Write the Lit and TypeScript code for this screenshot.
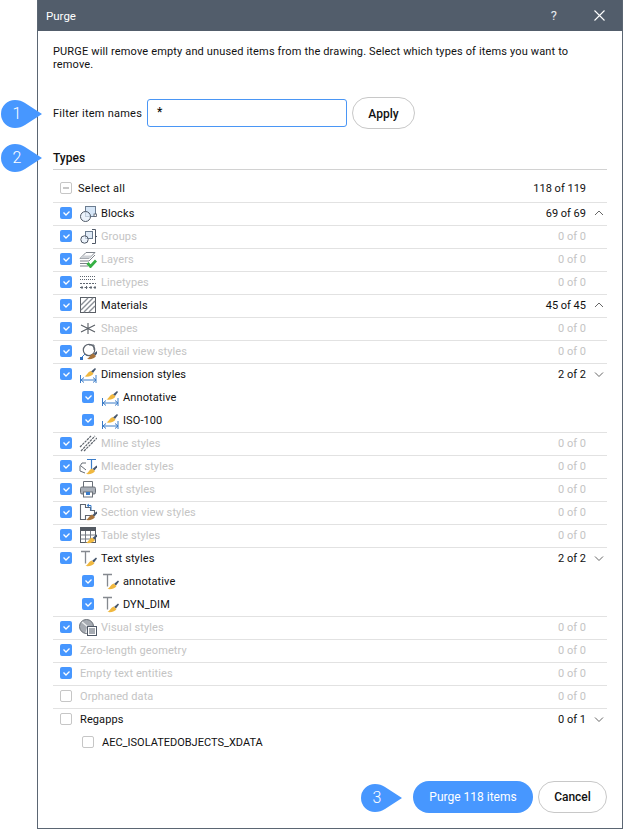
import { LitElement, html, css, svg, nothing } from "lit";
import { customElement } from "lit/decorators.js";

const G = "#5f6670";
const brush = (x: number, y: number, head = "#f0b840") => svg`
  <path d="M${x + 6.5} ${y - 5}L${x + 10.5} ${y - 8.5}L${x + 11.5} ${y - 7.5}L${x + 8.5} ${y - 3.5}Z" fill="#46566c"/>
  <path d="M${x + 6} ${y - 5.5}L${x + 9} ${y - 3}C${x + 8} ${y - 0.5} ${x + 4} ${y + 0.5} ${x} ${y}C${x + 2} ${y - 1} ${x + 3} ${y - 4} ${x + 6} ${y - 5.5}Z" fill=${head}/>`;
const BR = "#a8743c";

const icons: Record<string, any> = {
  blocks: svg`<rect x="6.500" y="2.500" width="10" height="10" fill="#d6e6f7" stroke="#6b7c90"/><circle cx="6.500" cy="12.500" r="5" fill="#e4eef9" fill-opacity=".7" stroke="#4f5866"/><rect x="15" y="10" width="2.500" height="2.500" fill="#fff" stroke="#4f5866" stroke-width=".8"/>`,
  groups: svg`<rect x="6.500" y="4.500" width="7" height="7" fill="#dfeaf6" stroke="#6b7c90"/><circle cx="5.500" cy="12.500" r="3.700" fill="#e4eef9" fill-opacity=".7" stroke="#4f5866"/><path d="M13 2.500h3.500v14H13M16.500 9.500h1.500" fill="none" stroke="#4f5866"/>`,
  layers: svg`<path d="M1 8.500L7 2.500h9l-6 6zM1 11h9l6 -6M1 13.500h8M1 16h8" fill="none" stroke="#7c828a"/><path d="M1 8.500l3 -3h9l-3 3z" fill="#cfd2d6"/><path d="M8.500 13l3 3.500 5.500 -6" fill="none" stroke="#35b043" stroke-width="2.800"/>`,
  linetypes: svg`<path d="M1 3.500h16M1 6.500h16" stroke="${G}" stroke-dasharray="1 1"/><path d="M1 10.500h16" stroke="${G}" stroke-dasharray="2 1"/><path d="M1 14.500h16" stroke="${G}" stroke-dasharray="3 1.500"/><path d="M3 13v3M7.500 13v3M12 13v3M16 13v3" stroke="${G}"/>`,
  materials: svg`<rect x="1.500" y="1.500" width="15" height="15" fill="#fff" stroke="#5a5f66"/><path d="M2 9l7 -7M2 14l12 -12M5 16l11 -11M10 16l6 -6" stroke="#8a8f96" stroke-width="1.400"/>`,
  shapes: svg`<path d="M9 4v11M2 6l14 7M16 6l-14 7" stroke="#5a5f66" stroke-width="1.100"/>`,
  detail: svg`<circle cx="10" cy="8" r="5.700" fill="none" stroke="${G}" stroke-width="1.200"/><path d="M10 3h5v5" fill="none" stroke="${G}"/><path d="M6 12l-3 3" stroke="#3b7cc8"/><rect x="1" y="15" width="3" height="3" fill="#2f6fc0"/>${brush(8, 17, BR)}`,
  dim: svg`<path d="M1.500 10v8M17 10v8M2 15h15M5 12.500l-3 2.500 3 2.500M14 12.500l3 2.500 -3 2.500" fill="none" stroke="#3b7cc8"/>${brush(5.500, 11.500)}`,
  mline: svg`<path d="M2 17L16 2M5 17L18 4M1 13L12 2" fill="none" stroke="#5f656d" stroke-dasharray="2.500 .8" stroke-width="1.200"/>`,
  mleader: svg`<path d="M8 2.500h9M12.500 2.500v10" stroke="#3b7cc8" fill="none" stroke-width="1.200"/><path d="M7 6H3L1 9v5l5 2M2 9l5 4" fill="none" stroke="#666c75"/>${brush(7, 17)}`,
  plot: svg`<path d="M4.500 7V1.500h9V7" fill="#fff" stroke="#6a7078"/><rect x="1.500" y="7" width="15" height="7" rx="1.500" fill="#aab0b8" stroke="#6a7078"/><rect x="4.500" y="12" width="9" height="5" fill="#fff" stroke="#6a7078"/><rect x="7" y="12" width="4" height="3" fill="#3b7cc8"/>`,
  section: svg`<path d="M1.500 1.500h5v3h5v3h4v5h-9v4h-5z" fill="#fff" stroke="#5f6670" stroke-width="1.100"/><path d="M8 2.500h4v5M8 2.500l2 -1.500M8 2.500l2 1.500" fill="none" stroke="#3b7cc8"/>${brush(7, 17, BR)}`,
  table: svg`<rect x="1.500" y="1.500" width="15" height="15" fill="#fff" stroke="#555b63"/><rect x="1.500" y="1.500" width="15" height="3.500" fill="#555b63"/><path d="M1.500 9h15M1.500 13h15M6.500 5v11.500M11.500 5v11.500" stroke="#777d85"/>${brush(7, 17)}`,
  text: svg`<path d="M2 2.500h9M6.500 2.500v12" stroke="#85898f" fill="none" stroke-width="1.300"/>${brush(6.500, 17)}`,
  visual: svg`<circle cx="7.500" cy="8.500" r="7" fill="#a6abb2" stroke="#6a7078"/><path d="M3 4l6 5 -2 6" fill="none" stroke="#e8eaec" stroke-width="1.500"/><rect x="8.500" y="8.500" width="9" height="9" fill="#fff" stroke="#4f5866"/><path d="M10 11h6M10 13h6M10 15h6" stroke="#4f5866"/>`,
};

type Row = {
  label: string; icon?: string; count?: string; on?: boolean; active?: boolean;
  chev?: "up" | "down"; child?: boolean; wide?: boolean; caps?: boolean;
};

const rows: Row[] = [
  { label: "Blocks", icon: "blocks", count: "69 of 69", on: true, active: true, chev: "up" },
  { label: "Groups", icon: "groups", count: "0 of 0", on: true },
  { label: "Layers", icon: "layers", count: "0 of 0", on: true },
  { label: "Linetypes", icon: "linetypes", count: "0 of 0", on: true },
  { label: "Materials", icon: "materials", count: "45 of 45", on: true, active: true, chev: "up" },
  { label: "Shapes", icon: "shapes", count: "0 of 0", on: true },
  { label: "Detail view styles", icon: "detail", count: "0 of 0", on: true },
  { label: "Dimension styles", icon: "dim", count: "2 of 2", on: true, active: true, chev: "down" },
  { label: "Annotative", icon: "dim", on: true, active: true, child: true },
  { label: "ISO-100", icon: "dim", on: true, active: true, child: true },
  { label: "Mline styles", icon: "mline", count: "0 of 0", on: true },
  { label: "Mleader styles", icon: "mleader", count: "0 of 0", on: true },
  { label: "Plot styles", icon: "plot", count: "0 of 0", on: true, wide: true },
  { label: "Section view styles", icon: "section", count: "0 of 0", on: true },
  { label: "Table styles", icon: "table", count: "0 of 0", on: true },
  { label: "Text styles", icon: "text", count: "2 of 2", on: true, active: true, chev: "down" },
  { label: "annotative", icon: "text", on: true, active: true, child: true },
  { label: "DYN_DIM", icon: "text", on: true, active: true, child: true },
  { label: "Visual styles", icon: "visual", count: "0 of 0", on: true },
  { label: "Zero-length geometry", count: "0 of 0", on: true },
  { label: "Empty text entities", count: "0 of 0", on: true },
  { label: "Orphaned data", count: "0 of 0" },
  { label: "Regapps", count: "0 of 1", active: true, chev: "down" },
  { label: "AEC_ISOLATEDOBJECTS_XDATA", active: true, child: true, caps: true },
];

@customElement("app-root")
export class AppRoot extends LitElement {
  static styles = css`
    :host { display: block; width: 623px; height: 829px; position: relative; overflow: hidden; background: #fff;
      font-family: Roboto, sans-serif; font-size: 11px; color: #111; }
    .dialog { margin-left: 37px; width: 586px; height: 829px; box-sizing: border-box; display: flex; flex-direction: column;
      border-left: 1px solid #5b6673; border-right: 1px solid #5b6673; border-bottom: 1px solid #5b6673; background: #fff; }
    .title { height: 31px; flex: none; background: #525d6b; color: #fff; display: flex; align-items: center; padding: 0 17px 0 8px; font-size: 11.5px; }
    .title .t { flex: 1; }
    .title .q { font-size: 13px; margin-right: 37px; color: #e8eaee; }
    .title svg { display: block; }
    .body { flex: 1; display: flex; flex-direction: column; padding: 0 15px; }
    .intro { margin: 14px 0 0; line-height: 13px; height: 26px; letter-spacing: .15px; }
    .filter { display: flex; align-items: center; margin-top: 26px; height: 32px; }
    .filter label { width: 94px; flex: none; letter-spacing: .24px; padding-top: 1px; }
    .input { width: 200px; height: 28px; box-sizing: border-box; border: 1px solid #4a96f5; border-radius: 3px; padding: 0 0 0 9px; line-height: 24px; font-weight: 500; font-size: 12px; }
    .btn { box-sizing: border-box; height: 32px; border-radius: 16px; display: flex; align-items: center; justify-content: center; font-weight: 500; font-size: 12px; }
    .apply { width: 63px; margin-left: 5px; border: 1px solid #c8c8c8; padding-top: 1px; }
    h2 { margin: 22px 0 0; font-size: 12px; line-height: 14px; font-weight: 500; height: 14px; padding-bottom: 4px; border-bottom: 1px solid #d2d2d2; }
    .row { height: 23px; box-sizing: border-box; display: flex; align-items: center; padding: 0 0 2px 7px; border-top: 1px solid #e2e2e2; }
    .row.first { height: 32px; border-top: 0; padding: 4px 0 0 7px; }
    .row.first .lab { margin-left: 6px; letter-spacing: .3px; }
    .row.child { border-top: 0; padding: 1px 0 2px 29px; }
    .row.off { color: #c4c4c4; }
    .box { width: 12px; height: 12px; box-sizing: border-box; border-radius: 2px; flex: none; display: flex; align-items: center; justify-content: center; }
    .box.on { background: #4797ff; }
    .box.un { border: 1px solid #c6c6c6; }
    .box svg, .ic svg { display: block; }
    .ic { width: 18px; height: 18px; margin-left: 7px; flex: none; }
    .lab { margin-left: 8px; flex: 1; white-space: nowrap; letter-spacing: .1px; }
    .row.caps .lab { letter-spacing: 0; }
    .row.icon .lab { margin-left: 4px; }
    .row.wide .lab { margin-left: 6px; }
    .count { text-align: right; margin-right: 7px; }
    .chev { width: 12px; height: 12px; margin-right: 2px; flex: none; }
    .chev svg { display: block; }
    .foot { margin-top: auto; margin-bottom: 15px; display: flex; justify-content: flex-end; gap: 5px; }
    .purge { width: 120px; background: #4797ff; color: #fff; font-weight: 400; }
    .cancel { width: 69px; border: 1px solid #c8c8c8; }
    .call { position: absolute; width: 42px; height: 28px; color: #fff; font-size: 16px; font-weight: 300; }
    .call svg { position: absolute; inset: 0; display: block; }
    .call span { position: absolute; left: 0; top: 0; width: 32px; line-height: 28px; text-align: center; }
    .c1 { left: 1px; top: 100px; } .c2 { left: 1px; top: 144px; } .c3 { left: 361px; top: 784px; }
  `;

  private box(state: "on" | "un" | "mix") {
    if (state === "on") return html`<span class="box on"><svg width="9" height="9" viewBox="0 0 9 9"><path d="M1.500 3.500L4 6l3.500 -3.500" fill="none" stroke="#fff" stroke-width="1.300"/></svg></span>`;
    if (state === "mix") return html`<span class="box un"><svg width="8" height="8" viewBox="0 0 8 8"><path d="M1 4h6" stroke="#b5b5b5" stroke-width="1.500"/></svg></span>`;
    return html`<span class="box un"></span>`;
  }

  private row(r: Row) {
    const cls = ["row", r.child ? "child" : "", r.active ? "" : "off", r.icon ? "icon" : "", r.wide ? "wide" : "", r.caps ? "caps" : ""].join(" ");
    return html`<div class=${cls}>
      ${this.box(r.on ? "on" : "un")}
      ${r.icon ? html`<span class="ic"><svg width="18" height="18" viewBox="0 0 18 18">${icons[r.icon]}</svg></span>` : nothing}
      <span class="lab">${r.label}</span>
      ${r.count ? html`<span class="count">${r.count}</span>` : nothing}
      <span class="chev">${r.chev ? html`<svg width="12" height="12" viewBox="0 0 12 12"><path d=${r.chev === "up" ? "M2 8l4 -4 4 4" : "M2 4.500l4 4 4 -4"} fill="none" stroke="#666" stroke-width="1"/></svg>` : nothing}</span>
    </div>`;
  }

  private call(n: number, c: string) {
    return html`<div class="call ${c}"><svg width="42" height="28" viewBox="0 0 42 28"><path d="M14 0C18 0 21 1 24 3L41 14 24 25C21 27 18 28 14 28A14 14 0 0 1 14 0Z" fill="#4797ff"/></svg><span>${n}</span></div>`;
  }

  render() {
    return html`
      <div class="dialog">
        <div class="title"><span class="t">Purge</span><span class="q">?</span>
          <svg width="11" height="11" viewBox="0 0 11 11"><path d="M.5 .5l10 10M10.500 .5l-10 10" stroke="#fff" stroke-width="1.100"/></svg>
        </div>
        <div class="body">
          <p class="intro">PURGE will remove empty and unused items from the drawing. Select which types of items you want to<br />remove.</p>
          <div class="filter"><label>Filter item names</label><div class="input">*</div><div class="btn apply">Apply</div></div>
          <h2>Types</h2>
          <div class="row first">${this.box("mix")}<span class="lab">Select all</span><span class="count">118 of 119</span><span class="chev"></span></div>
          ${rows.map((r) => this.row(r))}
          <div class="foot"><div class="btn purge">Purge 118 items</div><div class="btn cancel">Cancel</div></div>
        </div>
      </div>
      ${this.call(1, "c1")}${this.call(2, "c2")}${this.call(3, "c3")}
    `;
  }
}
